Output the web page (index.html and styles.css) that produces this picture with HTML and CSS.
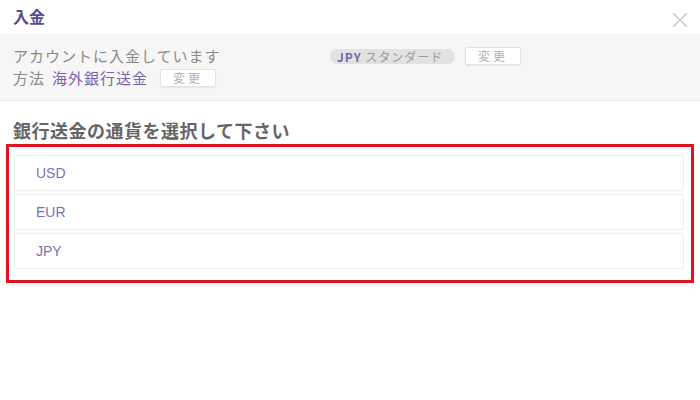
FILE: index.html
```html
<!DOCTYPE html>
<html lang="ja">
<head>
    <meta charset="UTF-8">
    <meta name="viewport" content="width=device-width, initial-scale=1.0">
    <title>入金</title>
    <link rel="stylesheet" href="styles.css">
</head>
<body>
    <div class="modal">
        <div class="modal-header">
            <div class="modal-title">入金</div>
            <button class="close" aria-label="閉じる">
                <svg width="16" height="16" viewBox="0 0 16 16">
                    <path d="M1 1 L15 15 M15 1 L1 15" stroke="#c4c4c4" stroke-width="1.3" fill="none"/>
                </svg>
            </button>
        </div>

        <div class="summary">
            <div class="summary-left">
                <div class="summary-line">アカウントに入金しています</div>
                <div class="summary-line">
                    方法 <span class="method">海外銀行送金</span>
                    <button class="change">変更</button>
                </div>
            </div>
            <div class="summary-right">
                <span class="pill"><b>JPY</b> スタンダード</span>
                <button class="change">変更</button>
            </div>
        </div>

        <div class="content">
            <h2 class="section-title">銀行送金の通貨を選択して下さい</h2>
            <div class="currency-box">
                <div class="currency">USD</div>
                <div class="currency">EUR</div>
                <div class="currency">JPY</div>
            </div>
        </div>
    </div>
</body>
</html>
```

FILE: styles.css
```css
body {
    margin: 0;
    background: #ffffff;
    font-family: "Noto Sans CJK JP", "Noto Sans", sans-serif;
}

.modal {
    width: 700px;
    height: 400px;
}

.modal-header {
    height: 34px;
    display: flex;
    align-items: center;
    justify-content: space-between;
    padding: 0 12px 0 13px;
    box-sizing: border-box;
}

.modal-title {
    font-size: 16px;
    font-weight: bold;
    color: #5b4a8c;
    margin-top: -3px;
}

.close {
    border: none;
    background: none;
    padding: 0;
    width: 16px;
    height: 16px;
    margin-top: 6px;
    cursor: pointer;
}

.summary {
    background: #f6f6f6;
    border-bottom: 1px solid #ececec;
    padding: 11px 13px;
    display: flex;
    align-items: flex-start;
    height: 67px;
    box-sizing: border-box;
}

.summary-left {
    width: 317px;
}

.summary-line {
    font-size: 15px;
    letter-spacing: 1px;
    line-height: 22px;
    color: #8a8a8a;
    display: flex;
    align-items: center;
    white-space: nowrap;
}

.method {
    color: #7a62b0;
    margin-left: 7px;
}

.change {
    font-family: inherit;
    font-size: 12px;
    color: #b0b0b0;
    background: #ffffff;
    border: 1px solid #e2e2e2;
    border-radius: 2px;
    height: 18px;
    width: 56px;
    padding: 0;
    letter-spacing: 3px;
    line-height: 16px;
    box-shadow: 0 1px 1px rgba(0, 0, 0, 0.06);
}

.summary-line .change {
    margin-left: 12px;
}

.summary-right {
    display: flex;
    align-items: center;
    gap: 10px;
    height: 22px;
}

.pill {
    background: #e2e2e2;
    border-radius: 8px;
    font-size: 12px;
    line-height: 15px;
    letter-spacing: 1px;
    padding: 0 8px 0 7px;
    color: #9a9a9a;
    width: 110px;
    white-space: nowrap;
}

.pill b {
    color: #7a68aa;
}

.content {
    padding: 0 6px;
}

.section-title {
    font-size: 18px;
    font-weight: bold;
    letter-spacing: 0.5px;
    color: #666666;
    margin: 17px 0 2px 7px;
    line-height: 24px;
}

.currency-box {
    border: 3px solid #e0141e;
    padding: 8px 7px 11px 5px;
    display: flex;
    flex-direction: column;
    gap: 3px;
}

.currency {
    height: 36px;
    box-sizing: border-box;
    border: 1px solid #ededed;
    border-radius: 2px;
    display: flex;
    align-items: center;
    padding-left: 21px;
    font-size: 14px;
    color: #7c6fae;
    font-family: "Liberation Sans", "Noto Sans CJK JP", sans-serif;
}
```
